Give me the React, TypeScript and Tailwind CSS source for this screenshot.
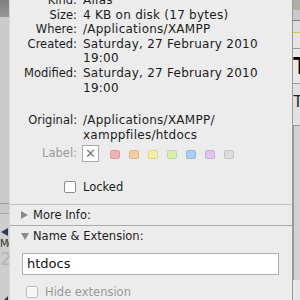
import React from "react";

const font = { fontFamily: '"DejaVu Sans", "Liberation Sans", sans-serif' };

function Row({ label, children, gray }: { label: string; children: React.ReactNode; gray?: boolean }) {
  return (
    <div className="flex items-baseline">
      <div className={`w-[73px] shrink-0 text-right pr-[6px] text-[11.5px] ${gray ? "text-[#9a9a9a]" : "text-[#1c1c1c]"}`}>{label}</div>
      <div className="text-[#1c1c1c] text-[12px] tracking-[0.25px]">{children}</div>
    </div>
  );
}

export default function App() {
  const swatches = ["#f1b3b3", "#f6cda2", "#f2f0a6", "#dcebb0", "#abcdf2", "#dcc6ea", "#dcdcdc"];
  const swBorder = ["#dc9c9c", "#e3b68a", "#dcd98e", "#c4d79a", "#93b6de", "#c6aed8", "#c4c4c4"];
  return (
    <div className="flex w-[300px] h-[300px] overflow-hidden bg-[#ececec] text-[11px]" style={font}>
      {/* left background window */}
      <div className="w-[9px] shrink-0 flex flex-col bg-[#c9c9c9] relative">
        <div className="h-[17px] bg-gradient-to-b from-[#7f7f7f] to-[#969696]" />
        <div className="h-[186px] bg-[#cacaca]" />
        <div className="h-px bg-[#9c9c9c]" />
        <div className="h-[9px] bg-[#c8c8c8]" />
        <div className="h-px bg-[#a8a8a8]" />
        <div className="h-[14px] bg-[#cdcdcd]" />
        <div className="h-[8px] flex items-center bg-[#cdcdcd]">
          <div className="w-0 h-0 border-y-[4px] border-y-transparent border-r-[7px] border-r-[#2b3a5c] ml-[1px]" />
        </div>
        <div className="h-[12px] bg-[#cdcdcd] text-[10px] leading-[12px] text-[#333] tracking-[-1px] overflow-hidden pt-[2px]">Mo</div>
        <div className="h-[22px] bg-[#cdcdcd] text-[18px] leading-[22px] text-[#b5b5b5] overflow-hidden">2</div>
        <div className="flex-1 bg-[#cdcdcd] flex items-end">
          <div className="w-0 h-0 border-l-[4px] border-l-transparent border-b-[4px] border-b-[#333] ml-[4px]" />
        </div>
      </div>
      {/* panel */}
      <div className="flex-1 flex flex-col border-l border-l-[#d6d6d6] border-r border-r-[#9a9a9a] bg-[#ececec]">
        <div className="flex flex-col leading-[14.6px] mt-[-7px]">
          <Row label="Kind:">Alias</Row>
          <Row label="Size:">4 KB on disk (17 bytes)</Row>
          <Row label="Where:">/Applications/XAMPP</Row>
          <Row label="Created:">Saturday, 27 February 2010<br />19:00</Row>
          <Row label="Modified:">Saturday, 27 February 2010<br />19:00</Row>
        </div>
        <div className="flex flex-col leading-[14.4px] mt-[18px]">
          <Row label="Original:">/Applications/XAMPP/<br />xamppfiles/htdocs</Row>
        </div>
        <div className="flex items-center mt-[3px] h-[17px]">
          <div className="w-[73px] shrink-0 text-right pr-[6px] text-[11.5px] text-[#9a9a9a]">Label:</div>
          <div className="w-[17px] h-[17px] ml-[-1px] bg-white border border-[#a8a8a8] flex items-center justify-center text-[#777] text-[13px] leading-none">✕</div>
          <div className="flex gap-[9px] ml-[11px] mt-[2px]">
            {swatches.map((c, i) => (
              <div key={i} className="w-[10px] h-[9px] rounded-[2px] border" style={{ backgroundColor: c, borderColor: swBorder[i] }} />
            ))}
          </div>
        </div>
        <div className="flex items-center mt-[19px] ml-[54px] h-[13px]">
          <div className="w-[12px] h-[12px] rounded-[2px] bg-white border border-[#8c8c8c]" />
          <span className="ml-[7px] text-[#1c1c1c] text-[11.5px]">Locked</span>
        </div>
        <div className="mt-[10px] h-px bg-[#c2c2c2]" />
        <div className="h-[20px] flex items-center pl-[11px] pt-[1px] text-[#1c1c1c] text-[11.5px]">
          <div className="w-0 h-0 border-y-[4px] border-y-transparent border-l-[7px] border-l-[#8a8a8a]" />
          <span className="ml-[5px]">More Info:</span>
        </div>
        <div className="h-px bg-[#a9a9a9]" />
        <div className="h-[22px] flex items-center pl-[11px] text-[#1c1c1c] text-[11.5px]">
          <div className="w-0 h-0 border-x-[4px] border-x-transparent border-t-[7px] border-t-[#8a8a8a]" />
          <span className="ml-[4px]">Name &amp; Extension:</span>
        </div>
        <div className="mx-[12px] mt-[5px] w-[257px] h-[22px] bg-white border border-[#b0b0b0] flex items-center pl-[4px] text-[13px] text-[#111]">htdocs</div>
        <div className="flex items-center mt-[11px] ml-[16px] h-[13px]">
          <div className="w-[12px] h-[12px] rounded-[2px] bg-[#f7f7f7] border border-[#bdbdbd]" />
          <span className="ml-[7px] text-[#9a9a9a] text-[11.5px]">Hide extension</span>
        </div>
      </div>
      {/* right background window */}
      <div className="w-[7px] shrink-0 flex flex-col bg-[#d3d3d3] overflow-hidden">
        <div className="h-[10px] bg-[#b3aca4]" />
        <div className="h-[10px] bg-[#c9c9c9]" />
        <div className="h-px bg-[#7f7f7f]" />
        <div className="h-[11px] bg-[#dcdcdc]" />
        <div className="h-px bg-[#e2c34c]" />
        <div className="h-[15px] bg-[#e4e4e4]" />
        <div className="h-px bg-[#9a9a9a]" />
        <div className="h-[34px] bg-[#e8e8e8] text-[24px] leading-[34px] font-bold text-black overflow-hidden" style={{ fontFamily: '"Liberation Sans", sans-serif' }}>T</div>
        <div className="h-px bg-[#9a9a9a]" />
        <div className="h-[41px] bg-[#e2e2e2] text-[16px] leading-[36px] text-[#222] overflow-hidden" style={{ fontFamily: '"Liberation Sans", sans-serif' }}>T</div>
        <div className="h-px bg-[#9a9a9a]" />
        <div className="h-[154px] bg-[#d2d2d2] border-l border-l-[#9c9c9c]" />
        <div className="flex-1 bg-[#e6e6e6]" />
      </div>
    </div>
  );
}
